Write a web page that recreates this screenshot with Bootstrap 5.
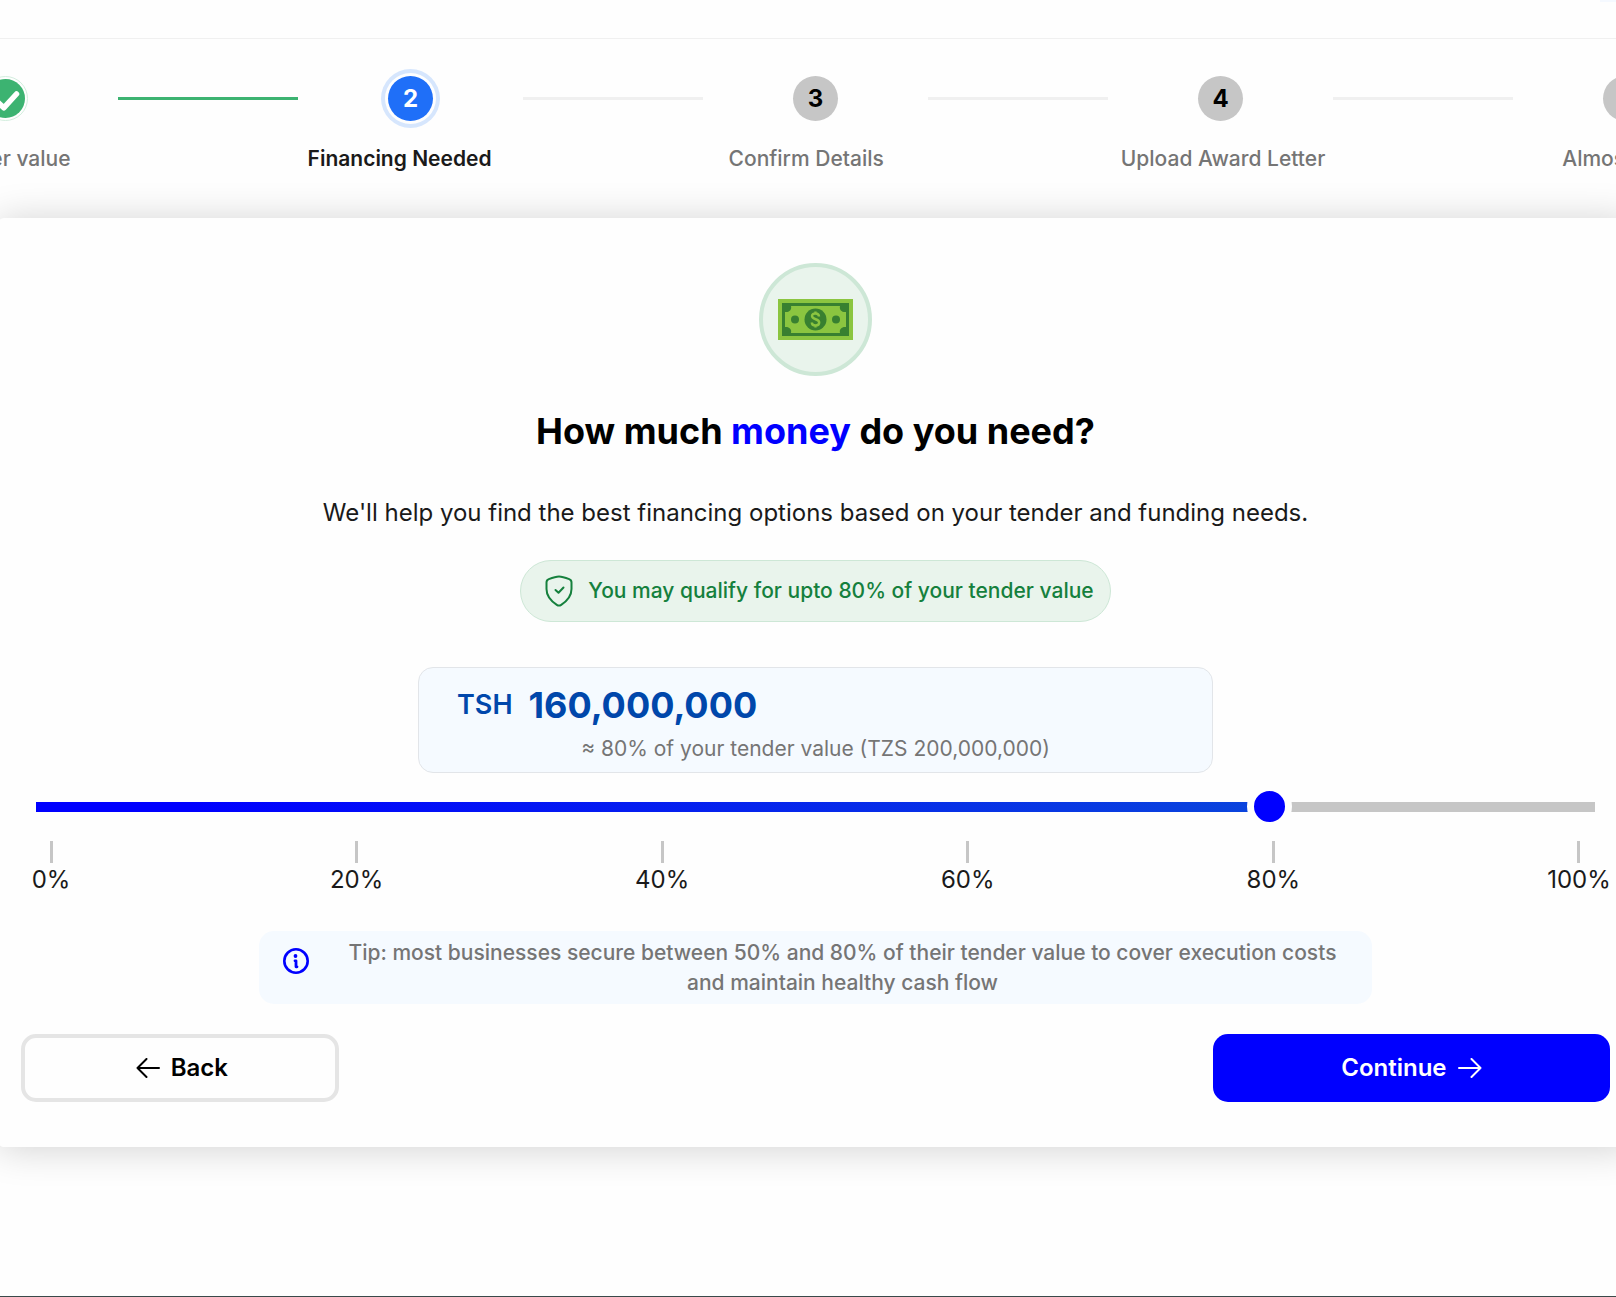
<!DOCTYPE html>
<html lang="en">
<head>
<meta charset="utf-8">
<meta name="viewport" content="width=device-width, initial-scale=1">
<title>Financing Needed</title>
<link href="https://cdn.jsdelivr.net/npm/bootstrap@5.3.0/dist/css/bootstrap.min.css" rel="stylesheet">
<style>
  body { font-family: Inter, "Liberation Sans", sans-serif; font-size: 24px; color: #1a1a1a; background: #fefefe; overflow-x: hidden; }
  .page-wrap { padding-left: 15px; }
  .top-strip { height: 39px; border-bottom: 1px solid #f0f0f0; }
  .top-chip { width: 16px; height: 2px; background: #f5f9ff; }

  .stepper { padding: 37px 0 43px; }
  .step-item { flex: 0 0 225px; }
  .step-dot { width: 45px; height: 45px; background: #c6c6c6; color: #000; font-weight: 700; }
  .step-dot.is-active { background: #1f6ff8; color: #fff; box-shadow: 0 0 0 3px #fefefe, 0 0 0 7px #d6e6fd; }
  .step-dot.is-done { background: #3cb371 content-box; padding: 3px; border: 0; outline: 1px solid #d3eede; outline-offset: -1px; }
  .step-line { flex: 0 0 calc(25vw - 224px); height: 3px; background: #f0f0f0; }
  .step-line.is-done { background: #3cb371; }
  .step-labels { margin-top: 22px; column-gap: calc(25vw - 167px); font-size: 21px; line-height: 32px; font-weight: 500; color: #757575; white-space: nowrap; }
  .step-labels .is-current { color: #1a1a1a; font-weight: 600; }

  .form-panel { margin: 0 -17px; padding: 45px 23px; background: #fefefe; border-radius: 6px; box-shadow: 0 2px 38px rgba(0,0,0,.18); }
  .money-badge { width: 113px; height: 113px; background: #e9f4ec; border: 4px solid #cde7d6; }
  .panel-title { font-size: 36px; line-height: 54px; font-weight: 700; color: #000; margin: 28px 0 36px; }
  .accent { color: #00f; }
  .panel-sub { line-height: 38px; margin-bottom: 28px; }
  .qualify-pill { min-height: 62px; padding: 0 16px 0 24px; gap: 15px; border: 1px solid #cde7d6; background: #e9f4ec; color: #15803d; font-size: 21px; font-weight: 500; }
  .amount-box { width: 100%; max-width: 795px; margin-top: 45px; padding: 10px 38px 6px; background: #f5faff; border: 1px solid #e2e5e9; border-radius: 15px; }
  .amount-row { color: #0047ab; gap: 16px; }
  .amount-row label { font-size: 27px; font-weight: 600; }
  .amount-row input { font-size: 36px; line-height: 54px; height: 54px; font-weight: 700; color: inherit; background: none; border: 0; padding: 0; width: 100%; min-width: 0; }
  .amount-note { font-size: 21px; line-height: 34px; color: #757575; }

  .slider-area { padding: 0 15px; margin-top: 11px; }
  .percent-range { -webkit-appearance: none; appearance: none; display: block; width: 100%; height: 45px; margin: 0; background: none; }
  .percent-range::-webkit-slider-runnable-track { height: 10px; background: linear-gradient(to right, #00f 0%, #00f 10%, #0a46dc 80%, #c6c6c6 80%); }
  .percent-range::-webkit-slider-thumb { -webkit-appearance: none; width: 45px; height: 45px; margin-top: -18px; border-radius: 50%; border: 7px solid #fefefe; background: #00f; }
  .tick-row { padding: 0 16px 0 15px; margin-top: 12px; }
  .tick-cell { width: 0; line-height: 34px; color: #1a1a1a; }
  .tick-mark { flex: none; width: 3px; height: 22px; background: #c6c6c6; }

  .tip-box { width: 70%; margin-top: 34px; padding: 7px 24px 6px; gap: 28px; min-height: 73px; background: #f5faff; border-radius: 15px; color: #757575; font-size: 21px; line-height: 30px; font-weight: 500; }
  .tip-box svg { margin-top: 10px; }
  .action-row { margin-top: 30px; }
  .action-btn { height: 68px; border-radius: 15px; font-size: 24px; font-weight: 600; gap: 11px; }
  .btn-back { width: 20%; padding-left: 16px; border: 4px solid #e5e5e5; background: #fefefe; color: #000; }
  .btn-next { width: 25%; border: 0; background: #00f; color: #fff; }
  .btn-back:hover { background: #f5f5f5; border-color: #e5e5e5; color: #000; }
  .btn-next:hover { background: #0000d6; color: #fff; }
  .foot-strip { height: 1px; background: #3a4a4a; }
</style>
</head>
<body>
<div class="d-flex flex-column min-vh-100">
  <header class="top-strip d-flex justify-content-end align-items-start"><div class="top-chip"></div></header>

  <main class="page-wrap flex-grow-1">
    <nav class="stepper" aria-label="Progress">
      <div class="d-flex justify-content-center align-items-center">
        <div class="step-item d-flex justify-content-center">
          <span class="step-dot is-done rounded-circle d-flex align-items-center justify-content-center">
            <svg class="flex-shrink-0" width="30" height="30" viewBox="0 0 30 30" fill="none" stroke="#fff" stroke-width="5.500" stroke-linecap="round" stroke-linejoin="round"><path d="M6 17.500l6.800 6.300L25.500 10"/></svg>
          </span>
        </div>
        <div class="step-line is-done"></div>
        <div class="step-item d-flex justify-content-center" aria-current="step">
          <span class="step-dot is-active rounded-circle d-flex align-items-center justify-content-center">2</span>
        </div>
        <div class="step-line"></div>
        <div class="step-item d-flex justify-content-center">
          <span class="step-dot rounded-circle d-flex align-items-center justify-content-center">3</span>
        </div>
        <div class="step-line"></div>
        <div class="step-item d-flex justify-content-center">
          <span class="step-dot rounded-circle d-flex align-items-center justify-content-center">4</span>
        </div>
        <div class="step-line"></div>
        <div class="step-item d-flex justify-content-center">
          <span class="step-dot rounded-circle d-flex align-items-center justify-content-center">5</span>
        </div>
      </div>
      <div class="step-labels d-flex justify-content-center">
        <span>Tender value</span>
        <span class="is-current">Financing Needed</span>
        <span>Confirm Details</span>
        <span>Upload Award Letter</span>
        <span>Almost Done</span>
      </div>
    </nav>

    <form class="form-panel">
      <div class="d-flex flex-column align-items-center text-center">
        <div class="money-badge rounded-circle d-flex align-items-center justify-content-center">
          <svg class="flex-shrink-0" width="75" height="41" viewBox="0 0 75 41">
            <path fill="#8bc540" d="M0 0h75v41H0z"/>
            <path fill="#388030" d="M4 4h67v33H4z"/>
            <path fill="#8bc540" d="M5.500 5.500h64v30h-64z"/>
            <path fill="#388030" d="M5 5h65v31H5z"/>
            <path fill="#8bc540" d="M13 7h49c-1 4 2 6.500 6 6v15c-4-.5-7 2-6 6H13c1-4-2-6.500-6-6V13c4 .5 7-2 6-6z"/>
            <circle cx="37.500" cy="20.500" r="11" fill="#388030"/>
            <circle cx="17" cy="20.500" r="4" fill="#388030"/>
            <circle cx="58" cy="20.500" r="4" fill="#388030"/>
            <path fill="none" stroke="#8bc540" stroke-width="2.400" d="M41 17.500c0-4-7-4-7-.5 0 4 7.200 2.500 7.200 6.500 0 4-7.400 4-7.400 0M37.500 12.500v3M37.500 25.500v3"/>
          </svg>
        </div>
        <h1 class="panel-title">How much <span class="accent">money</span> do you need?</h1>
        <p class="panel-sub">We'll help you find the best financing options based on your tender and funding needs.</p>
        <div class="qualify-pill rounded-pill d-flex align-items-center">
          <svg width="28" height="32" viewBox="0 0 28 32" fill="none" stroke="#15803d" stroke-width="2" stroke-linecap="round" stroke-linejoin="round"><path d="M14 1.500c3.200 0 7.600 1.600 10.200 2.600 1.600.6 2.300 1.600 2.300 3.300V14c0 6.800-4.100 11.800-10.300 15.800-1.500 1-2.900 1-4.400 0C5.600 25.800 1.500 20.800 1.500 14V7.400c0-1.700.7-2.700 2.300-3.300C6.400 3.100 10.800 1.500 14 1.500z"/><path d="M10.500 15l3 2.800 5-5.300"/></svg>
          <span>You may qualify for upto 80% of your tender value</span>
        </div>
        <div class="amount-box">
          <div class="amount-row d-flex align-items-center">
            <label for="amount">TSH</label>
            <input id="amount" type="text" inputmode="numeric" value="160,000,000">
          </div>
          <div class="amount-note">≈ 80% of your tender value (TZS 200,000,000)</div>
        </div>
      </div>

      <div class="slider-area">
        <input class="percent-range" type="range" min="0" max="100" value="80" aria-label="Share of tender value">
        <div class="tick-row d-flex justify-content-between">
          <div class="tick-cell d-flex flex-column align-items-center"><i class="tick-mark"></i>0%</div>
          <div class="tick-cell d-flex flex-column align-items-center"><i class="tick-mark"></i>20%</div>
          <div class="tick-cell d-flex flex-column align-items-center"><i class="tick-mark"></i>40%</div>
          <div class="tick-cell d-flex flex-column align-items-center"><i class="tick-mark"></i>60%</div>
          <div class="tick-cell d-flex flex-column align-items-center"><i class="tick-mark"></i>80%</div>
          <div class="tick-cell d-flex flex-column align-items-center"><i class="tick-mark"></i>100%</div>
        </div>
      </div>

      <div class="tip-box d-flex align-items-start mx-auto">
        <svg class="flex-shrink-0" width="26" height="26" viewBox="0 0 26 26" fill="none" stroke="#00f"><circle cx="13" cy="13" r="11.700" stroke-width="2.600"/><circle cx="12.500" cy="8" r="1.900" fill="#00f" stroke="none"/><path stroke-width="2.800" stroke-linecap="round" stroke-linejoin="round" d="M12 12.800h1v6h1"/></svg>
        <span class="flex-grow-1 text-center">Tip: most businesses secure between 50% and 80% of their tender value to cover execution costs and maintain healthy cash flow</span>
      </div>

      <div class="action-row d-flex justify-content-between">
        <button type="button" class="btn action-btn btn-back d-flex align-items-center justify-content-center">
          <svg width="24" height="20" viewBox="0 0 24 20" fill="none" stroke="currentColor" stroke-width="2" stroke-linecap="round" stroke-linejoin="round"><path d="M23 10H1.500M10.500 1l-9 9 9 9"/></svg>
          Back
        </button>
        <button type="submit" class="btn action-btn btn-next d-flex align-items-center justify-content-center">
          Continue
          <svg width="24" height="20" viewBox="0 0 24 20" fill="none" stroke="currentColor" stroke-width="2" stroke-linecap="round" stroke-linejoin="round"><path d="M1 10h21.500M13.500 1l9 9-9 9"/></svg>
        </button>
      </div>
    </form>
  </main>

  <footer class="foot-strip"></footer>
</div>
<script src="https://cdn.jsdelivr.net/npm/bootstrap@5.3.0/dist/js/bootstrap.bundle.min.js"></script>
</body>
</html>
